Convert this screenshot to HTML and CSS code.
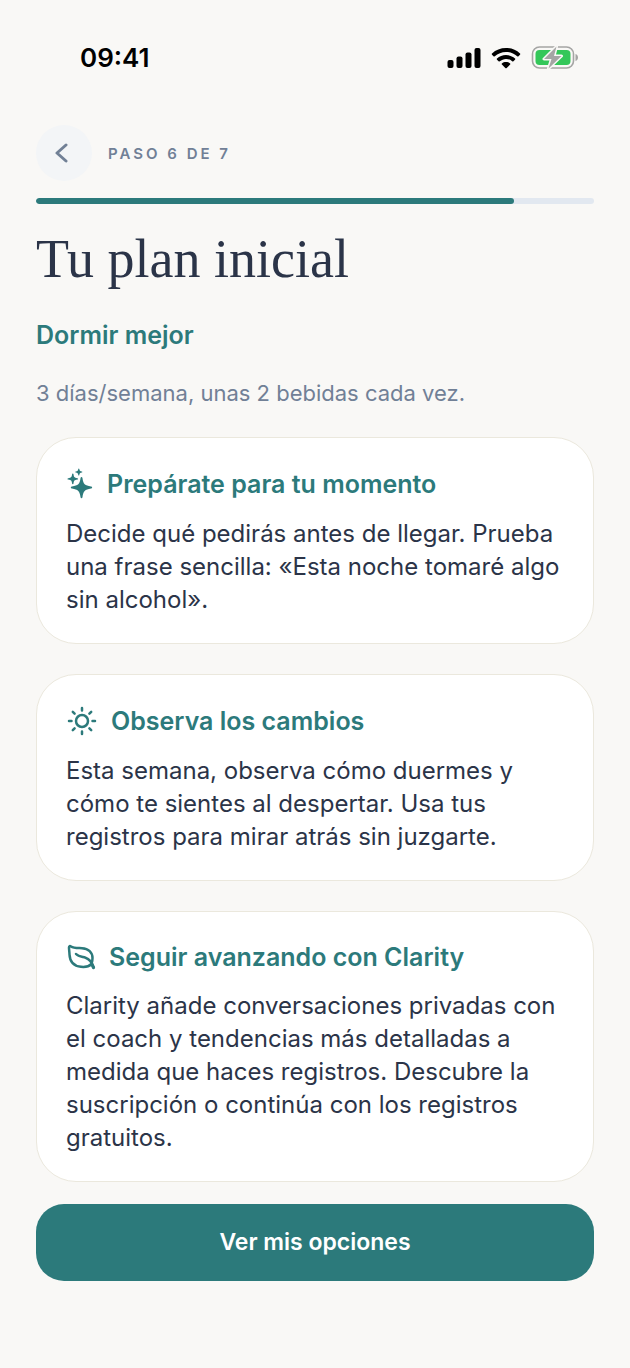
FILE: index.html
```html
<!DOCTYPE html>
<html lang="es">
<head>
    <meta charset="UTF-8">
    <meta name="viewport" content="width=device-width, initial-scale=1.0">
    <title>Tu plan inicial - Clarity</title>
    <link rel="stylesheet" href="styles.css">
</head>
<body>
    <div class="status-bar">
        <span class="status-time">09:41</span>
        <div class="status-icons">
            <svg width="34" height="22" viewBox="0 0 34 22" aria-hidden="true">
                <rect x="0.5" y="13" width="6" height="8" rx="2"/>
                <rect x="9.5" y="9.5" width="6" height="11.5" rx="2"/>
                <rect x="18.5" y="5.5" width="6" height="15.5" rx="2"/>
                <rect x="27.5" y="1" width="6" height="20" rx="2"/>
            </svg>
            <svg width="30" height="22" viewBox="0 0 30 22" aria-hidden="true">
                <path d="M15 1C9.600 1 4.700 3 1 6.400c-.4.400-.4.900 0 1.300l1.500 1.500c.4.400.9.400 1.300 0C6.800 6.500 10.700 4.900 15 4.900s8.200 1.600 11.200 4.300c.4.400.9.400 1.300 0L29 7.700c.4-.4.400-.9 0-1.300C25.300 3 20.400 1 15 1z"/>
                <path d="M15 8c-3.500 0-6.600 1.300-9 3.400-.4.400-.4.900 0 1.300l1.600 1.600c.3.300.8.300 1.200 0 1.700-1.500 3.800-2.400 6.200-2.400s4.500.9 6.200 2.400c.4.300.9.300 1.200 0l1.600-1.600c.4-.4.400-.9 0-1.300C21.600 9.300 18.500 8 15 8z"/>
                <path d="M15 15c-1.600 0-3 .5-4.100 1.400-.4.300-.4.800 0 1.200l3.400 3.400c.4.400 1 .4 1.400 0l3.400-3.400c.4-.4.400-.9 0-1.200C18 15.500 16.600 15 15 15z"/>
            </svg>
            <svg width="48" height="26" viewBox="0 0 48 26" aria-hidden="true">
                <rect x="1.500" y="2" width="41" height="21" rx="7" fill="#f9f8f6" stroke="#a5a5a4" stroke-width="1.600"/>
                <rect x="4.500" y="5" width="35" height="15" rx="4" fill="#34c759"/>
                <path d="M44.500 9c1.600.5 2.500 1.800 2.500 3.500s-.9 3-2.500 3.500z" fill="#a5a5a4"/>
                <path d="M25.500 1.500L13 14h7.500l-3 9.500L30.500 11H23z" fill="#a5a5a4" stroke="#f9f8f6" stroke-width="3" stroke-linejoin="round" paint-order="stroke"/>
            </svg>
        </div>
    </div>

    <main class="screen">
        <header class="step-header">
            <button class="back-button" type="button" aria-label="Atrás">
                <svg width="14" height="20" viewBox="0 0 14 20" aria-hidden="true">
                    <path d="M11 2L2 10l9 8"/>
                </svg>
            </button>
            <span class="step-label">PASO 6 DE 7</span>
        </header>
        <div class="progress" role="progressbar" aria-label="Progreso" aria-valuemin="0" aria-valuemax="7" aria-valuenow="6">
            <div class="progress-fill" style="width: 85.7%"></div>
        </div>

        <h1>Tu plan inicial</h1>
        <p class="goal">Dormir mejor</p>
        <p class="summary">3 días/semana, unas 2 bebidas cada vez.</p>

        <div class="cards">
            <section class="card">
                <h2>
                    <svg width="28" height="32" viewBox="0 0 28 32" fill="currentColor" aria-hidden="true">
                        <path d="M15.500 9q.8 0 1 1.200c.7 5.800 2.400 7.200 8.500 8.200q1.200.2 1.200 1t-1.200 1c-6.100 1-7.800 2.700-8.500 8.600q-.2 1.200-1 1.200t-1-1.200c-.7-5.900-2.400-7.600-8.500-8.600q-1.200-.2-1.200-1t1.200-1c6.100-1 7.800-2.400 8.500-8.200q.2-1.200 1-1.200z"/>
                        <path d="M6.800 5.500q.6 0 .7.800c.4 2.900.9 3.400 3.800 3.900q.8.100.8.700t-.8.700c-2.900.5-3.400 1-3.800 3.900q-.1.800-.7.800t-.7-.8c-.4-2.900-.9-3.400-3.800-3.900q-.8-.1-.8-.7t.8-.7c2.900-.5 3.400-1 3.800-3.900q.1-.8.700-.8z"/>
                        <path d="M12.800.5q.4 0 .5.500c.3 1.800.7 2.200 2.500 2.500q.6.100.6.500t-.6.500c-1.800.3-2.200.7-2.500 2.500q-.1.500-.5.500t-.5-.5c-.3-1.800-.7-2.200-2.500-2.500q-.6-.1-.6-.5t.6-.5c1.800-.3 2.200-.7 2.500-2.500q.1-.5.500-.5z"/>
                    </svg>
                    Prepárate para tu momento
                </h2>
                <p>Decide qué pedirás antes de llegar. Prueba una frase sencilla: «Esta noche tomaré algo sin alcohol».</p>
            </section>

            <section class="card">
                <h2>
                    <svg width="32" height="32" viewBox="0 0 32 32" fill="none" stroke="currentColor" stroke-width="2.500" stroke-linecap="round" aria-hidden="true">
                        <circle cx="16" cy="16" r="6"/>
                        <path d="M16 3v2.500M16 26.500V29M3 16h2.500M26.500 16H29M6.800 6.800l1.800 1.800M23.400 23.400l1.800 1.800M6.800 25.200l1.800-1.800M23.400 8.600l1.800-1.800"/>
                    </svg>
                    Observa los cambios
                </h2>
                <p>Esta semana, observa cómo duermes y cómo te sientes al despertar. Usa tus registros para mirar atrás sin juzgarte.</p>
            </section>

            <section class="card">
                <h2>
                    <svg width="30" height="28" viewBox="0 0 30 28" fill="none" stroke="currentColor" stroke-width="2.500" stroke-linecap="round" stroke-linejoin="round" aria-hidden="true">
                        <path d="M25.500 21C23 23.500 19.500 24.300 15 23.800 7.500 23 3.800 18 3.500 11.500 3.400 8.500 3 6.500 3 4.500c0-1.500 1-1.700 2-1 2.500 1.800 6.500 1.500 11 1.700C22.500 5.500 26.500 9.500 26.500 15c0 2-.2 4-1 6z"/>
                        <path d="M10 11c2.500 2.800 6 2.700 9.500 3.700 4.200 1.300 6.500 4.600 8 9.800"/>
                        <path d="M26 21.500l1.500 3" stroke-width="3.200"/>
                    </svg>
                    Seguir avanzando con Clarity
                </h2>
                <p>Clarity añade conversaciones privadas con el coach y tendencias más detalladas a medida que haces registros. Descubre la suscripción o continúa con los registros gratuitos.</p>
            </section>
        </div>

        <button class="primary-button" type="button">Ver mis opciones</button>
    </main>
</body>
</html>
```
FILE: styles.css
```css
* {
    box-sizing: border-box;
}

body {
    margin: 0;
    background-color: #f9f8f6;
    color: #2b3448;
    font-family: Inter, "Liberation Sans", sans-serif;
}

h1, h2, p {
    margin: 0;
}

button {
    border: none;
    cursor: pointer;
    font-family: inherit;
}

.status-bar {
    display: flex;
    justify-content: space-between;
    align-items: center;
    padding: 42px 51px 0 80px;
    color: #000;
}

.status-time {
    font-size: 26px;
    font-weight: 600;
    line-height: 32px;
}

.status-icons {
    display: flex;
    align-items: center;
    gap: 10px;
}

.screen {
    padding: 51px 36px 87px;
}

.step-header {
    display: flex;
    align-items: center;
    gap: 16px;
}

.back-button {
    display: flex;
    align-items: center;
    justify-content: center;
    width: 56px;
    height: 56px;
    padding: 0 4px 0 0;
    border-radius: 50%;
    background-color: #f3f5f7;
}

.back-button path {
    fill: none;
    stroke: #718096;
    stroke-width: 3;
    stroke-linecap: round;
    stroke-linejoin: round;
}

.step-label {
    color: #718096;
    font-size: 15px;
    font-weight: 600;
    letter-spacing: 3px;
}

.progress {
    height: 6px;
    margin-top: 17px;
    border-radius: 3px;
    background-color: #e2e8f0;
    overflow: hidden;
}

.progress-fill {
    height: 100%;
    border-radius: 3px;
    background-color: #2c7a7b;
}

h1 {
    margin-top: 23px;
    font-family: "Liberation Serif", serif;
    font-size: 54px;
    font-weight: 400;
    line-height: 64px;
}

.goal {
    margin-top: 28px;
    color: #2c7a7b;
    font-size: 25px;
    font-weight: 600;
    line-height: 32px;
}

.summary {
    margin-top: 27px;
    color: #718096;
    font-size: 22px;
    line-height: 30px;
}

.cards {
    display: grid;
    gap: 30px;
    margin-top: 29px;
}

.card {
    padding: 30px 29px 27px;
    border: 1px solid #ebe8dd;
    border-radius: 40px;
    background-color: #fff;
}

.card h2 {
    display: flex;
    align-items: center;
    gap: 13px;
    color: #2c7a7b;
    font-size: 25px;
    font-weight: 600;
    line-height: 30px;
}

.card h2 svg {
    flex-shrink: 0;
}

.card p {
    margin-top: 17px;
    font-size: 24px;
    line-height: 33px;
}

.primary-button {
    width: 100%;
    margin-top: 22px;
    padding: 22px;
    border-radius: 28px;
    background-color: #2c7a7b;
    color: #fff;
    font-size: 23px;
    font-weight: 600;
    line-height: 33px;
}
```
